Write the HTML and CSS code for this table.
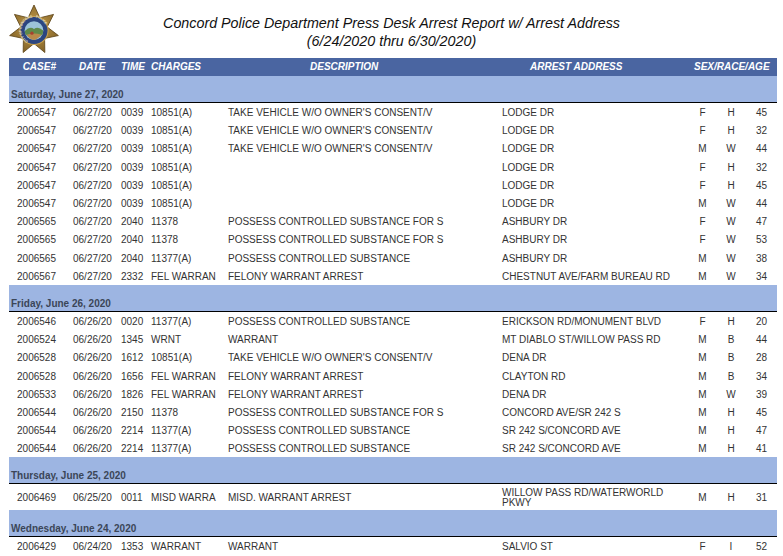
FILE: index.html
```html
<!DOCTYPE html>
<html lang="en">
<head>
<meta charset="utf-8">
<title>Concord Police Department Press Desk Arrest Report</title>
<link rel="stylesheet" href="styles.css">
</head>
<body>
<header class="page-head">
  <div class="logo">
    <svg width="50" height="50" viewBox="0 0 48 48" aria-hidden="true">
      <defs>
        <path id="ring" d="M24,36 A12,12 0 1,1 24.01,36"/>
        <radialGradient id="gold" cx="50%" cy="45%" r="60%">
          <stop offset="0" stop-color="#c9a24e"/>
          <stop offset="1" stop-color="#7e5e24"/>
        </radialGradient>
      </defs>
      <polygon points="24,0 29.64,12.29 42.76,9.04 36.67,21.11 47.4,29.34 34.16,32.11 34.41,45.62 24,37 13.59,45.62 13.84,32.11 0.6,29.34 11.33,21.11 5.24,9.04 18.36,12.29" fill="url(#gold)" stroke="#5e4418" stroke-width="0.8"/>
      <circle cx="24" cy="24.5" r="13.5" fill="#2c4680" stroke="#c9a24e" stroke-width="1"/>
      <circle cx="24" cy="24.5" r="9" fill="#9cc3d8"/>
      <path d="M15.2,25 Q20,20 24,23 Q28,20 32.8,24.5 L32.4,28 Q24,34.5 15.6,28 Z" fill="#5f8a4a"/>
      <path d="M16.8,28.5 Q24,26 31.2,28.5 Q27,33.4 24,33.5 Q20,33.4 16.8,28.5 Z" fill="#b88a4a"/>
      <circle cx="22" cy="27" r="1.6" fill="#a8402e"/>
      <text class="seal-text"><textPath href="#ring" startOffset="8%">CITY OF CONCORD · POLICE</textPath></text>
    </svg>
  </div>
  <h1 class="title">Concord Police Department Press Desk Arrest Report w/ Arrest Address<br>(6/24/2020 thru 6/30/2020)</h1>
  <div class="spacer"></div>
</header>

<main class="report">
  <div class="row head">
    <div class="c-case">CASE#</div>
    <div class="c-date">DATE</div>
    <div class="c-time">TIME</div>
    <div class="c-chg">CHARGES</div>
    <div class="c-desc">DESCRIPTION</div>
    <div class="c-addr">ARREST ADDRESS</div>
    <div class="c-sra">SEX/RACE/AGE</div>
  </div>

  <div class="day">Saturday, June 27, 2020</div>
  <div class="row"><div class="c-case">2006547</div><div class="c-date">06/27/20</div><div class="c-time">0039</div><div class="c-chg">10851(A)</div><div class="c-desc">TAKE VEHICLE W/O OWNER'S CONSENT/V</div><div class="c-addr">LODGE DR</div><div class="c-sex">F</div><div class="c-race">H</div><div class="c-age">45</div></div>
  <div class="row"><div class="c-case">2006547</div><div class="c-date">06/27/20</div><div class="c-time">0039</div><div class="c-chg">10851(A)</div><div class="c-desc">TAKE VEHICLE W/O OWNER'S CONSENT/V</div><div class="c-addr">LODGE DR</div><div class="c-sex">F</div><div class="c-race">H</div><div class="c-age">32</div></div>
  <div class="row"><div class="c-case">2006547</div><div class="c-date">06/27/20</div><div class="c-time">0039</div><div class="c-chg">10851(A)</div><div class="c-desc">TAKE VEHICLE W/O OWNER'S CONSENT/V</div><div class="c-addr">LODGE DR</div><div class="c-sex">M</div><div class="c-race">W</div><div class="c-age">44</div></div>
  <div class="row"><div class="c-case">2006547</div><div class="c-date">06/27/20</div><div class="c-time">0039</div><div class="c-chg">10851(A)</div><div class="c-desc"></div><div class="c-addr">LODGE DR</div><div class="c-sex">F</div><div class="c-race">H</div><div class="c-age">32</div></div>
  <div class="row"><div class="c-case">2006547</div><div class="c-date">06/27/20</div><div class="c-time">0039</div><div class="c-chg">10851(A)</div><div class="c-desc"></div><div class="c-addr">LODGE DR</div><div class="c-sex">F</div><div class="c-race">H</div><div class="c-age">45</div></div>
  <div class="row"><div class="c-case">2006547</div><div class="c-date">06/27/20</div><div class="c-time">0039</div><div class="c-chg">10851(A)</div><div class="c-desc"></div><div class="c-addr">LODGE DR</div><div class="c-sex">M</div><div class="c-race">W</div><div class="c-age">44</div></div>
  <div class="row"><div class="c-case">2006565</div><div class="c-date">06/27/20</div><div class="c-time">2040</div><div class="c-chg">11378</div><div class="c-desc">POSSESS CONTROLLED SUBSTANCE FOR S</div><div class="c-addr">ASHBURY DR</div><div class="c-sex">F</div><div class="c-race">W</div><div class="c-age">47</div></div>
  <div class="row"><div class="c-case">2006565</div><div class="c-date">06/27/20</div><div class="c-time">2040</div><div class="c-chg">11378</div><div class="c-desc">POSSESS CONTROLLED SUBSTANCE FOR S</div><div class="c-addr">ASHBURY DR</div><div class="c-sex">F</div><div class="c-race">W</div><div class="c-age">53</div></div>
  <div class="row"><div class="c-case">2006565</div><div class="c-date">06/27/20</div><div class="c-time">2040</div><div class="c-chg">11377(A)</div><div class="c-desc">POSSESS CONTROLLED SUBSTANCE</div><div class="c-addr">ASHBURY DR</div><div class="c-sex">M</div><div class="c-race">W</div><div class="c-age">38</div></div>
  <div class="row"><div class="c-case">2006567</div><div class="c-date">06/27/20</div><div class="c-time">2332</div><div class="c-chg">FEL WARRAN</div><div class="c-desc">FELONY WARRANT ARREST</div><div class="c-addr">CHESTNUT AVE/FARM BUREAU RD</div><div class="c-sex">M</div><div class="c-race">W</div><div class="c-age">34</div></div>

  <div class="day">Friday, June 26, 2020</div>
  <div class="row"><div class="c-case">2006546</div><div class="c-date">06/26/20</div><div class="c-time">0020</div><div class="c-chg">11377(A)</div><div class="c-desc">POSSESS CONTROLLED SUBSTANCE</div><div class="c-addr">ERICKSON RD/MONUMENT BLVD</div><div class="c-sex">F</div><div class="c-race">H</div><div class="c-age">20</div></div>
  <div class="row"><div class="c-case">2006524</div><div class="c-date">06/26/20</div><div class="c-time">1345</div><div class="c-chg">WRNT</div><div class="c-desc">WARRANT</div><div class="c-addr">MT DIABLO ST/WILLOW PASS RD</div><div class="c-sex">M</div><div class="c-race">B</div><div class="c-age">44</div></div>
  <div class="row"><div class="c-case">2006528</div><div class="c-date">06/26/20</div><div class="c-time">1612</div><div class="c-chg">10851(A)</div><div class="c-desc">TAKE VEHICLE W/O OWNER'S CONSENT/V</div><div class="c-addr">DENA DR</div><div class="c-sex">M</div><div class="c-race">B</div><div class="c-age">28</div></div>
  <div class="row"><div class="c-case">2006528</div><div class="c-date">06/26/20</div><div class="c-time">1656</div><div class="c-chg">FEL WARRAN</div><div class="c-desc">FELONY WARRANT ARREST</div><div class="c-addr">CLAYTON RD</div><div class="c-sex">M</div><div class="c-race">B</div><div class="c-age">34</div></div>
  <div class="row"><div class="c-case">2006533</div><div class="c-date">06/26/20</div><div class="c-time">1826</div><div class="c-chg">FEL WARRAN</div><div class="c-desc">FELONY WARRANT ARREST</div><div class="c-addr">DENA DR</div><div class="c-sex">M</div><div class="c-race">W</div><div class="c-age">39</div></div>
  <div class="row"><div class="c-case">2006544</div><div class="c-date">06/26/20</div><div class="c-time">2150</div><div class="c-chg">11378</div><div class="c-desc">POSSESS CONTROLLED SUBSTANCE FOR S</div><div class="c-addr">CONCORD AVE/SR 242 S</div><div class="c-sex">M</div><div class="c-race">H</div><div class="c-age">45</div></div>
  <div class="row"><div class="c-case">2006544</div><div class="c-date">06/26/20</div><div class="c-time">2214</div><div class="c-chg">11377(A)</div><div class="c-desc">POSSESS CONTROLLED SUBSTANCE</div><div class="c-addr">SR 242 S/CONCORD AVE</div><div class="c-sex">M</div><div class="c-race">H</div><div class="c-age">47</div></div>
  <div class="row"><div class="c-case">2006544</div><div class="c-date">06/26/20</div><div class="c-time">2214</div><div class="c-chg">11377(A)</div><div class="c-desc">POSSESS CONTROLLED SUBSTANCE</div><div class="c-addr">SR 242 S/CONCORD AVE</div><div class="c-sex">M</div><div class="c-race">H</div><div class="c-age">41</div></div>

  <div class="day">Thursday, June 25, 2020</div>
  <div class="row tall"><div class="c-case">2006469</div><div class="c-date">06/25/20</div><div class="c-time">0011</div><div class="c-chg">MISD WARRA</div><div class="c-desc">MISD. WARRANT ARREST</div><div class="c-addr">WILLOW PASS RD/WATERWORLD PKWY</div><div class="c-sex">M</div><div class="c-race">H</div><div class="c-age">31</div></div>

  <div class="day">Wednesday, June 24, 2020</div>
  <div class="row"><div class="c-case">2006429</div><div class="c-date">06/24/20</div><div class="c-time">1353</div><div class="c-chg">WARRANT</div><div class="c-desc">WARRANT</div><div class="c-addr">SALVIO ST</div><div class="c-sex">F</div><div class="c-race">I</div><div class="c-age">52</div></div>
</main>
</body>
</html>
```

FILE: styles.css
```css
html, body {
  margin: 0;
  padding: 0;
  background: #ffffff;
}

body {
  font-family: "Liberation Sans", Arial, sans-serif;
  color: #333333;
  overflow: hidden;
}

.page-head {
  display: grid;
  grid-template-columns: 1fr auto 1fr;
  height: 58px;
}

.logo {
  padding: 5px 0 0 9px;
}

.logo svg {
  display: block;
}

.seal-text {
  font-family: "Liberation Sans", Arial, sans-serif;
  font-size: 3.2px;
  font-weight: bold;
  fill: #e8e2c8;
}

.title {
  margin: 0;
  padding-top: 14px;
  font-size: 14.3px;
  line-height: 18px;
  font-weight: normal;
  font-style: italic;
  text-align: center;
  color: #111111;
}

.report {
  width: 768px;
  margin-left: 9px;
}

.row {
  display: grid;
  grid-template-columns: 51px 58px 30px 77px 274px 191px 25px 32px 30px;
  align-items: center;
  box-sizing: border-box;
  height: 18.2px;
  padding-top: 2px;
  font-size: 10px;
  line-height: 10px;
  white-space: nowrap;
}

.row.tall {
  height: 26px;
}

.row.tall .c-addr {
  white-space: normal;
  padding-right: 12px;
}

.row.head {
  height: 18px;
  padding-top: 0;
  background: #4a65a1;
  color: #ffffff;
  font-weight: bold;
  font-style: italic;
}

.c-case {
  text-align: right;
  padding-right: 4px;
}

.c-date {
  padding-left: 13px;
}

.head .c-date {
  padding-left: 19px;
}

.c-time {
  padding-left: 3px;
}

.c-chg {
  padding-left: 3px;
}

.c-desc {
  padding-left: 3px;
}

.head .c-desc {
  padding-left: 85px;
}

.c-addr {
  padding-left: 3px;
}

.head .c-addr {
  padding-left: 31px;
}

.c-sra {
  grid-column: 7 / span 3;
  padding-left: 4px;
}

.c-sex,
.c-race {
  text-align: center;
}

.c-age {
  text-align: right;
  padding-right: 10px;
}

.day {
  display: flex;
  align-items: flex-end;
  height: 27px;
  box-sizing: border-box;
  padding: 0 0 1px 2px;
  background: #9db5e2;
  border-bottom: 1px solid #000000;
  font-size: 10px;
  line-height: 12px;
  font-weight: bold;
  color: #3b4658;
}
```
